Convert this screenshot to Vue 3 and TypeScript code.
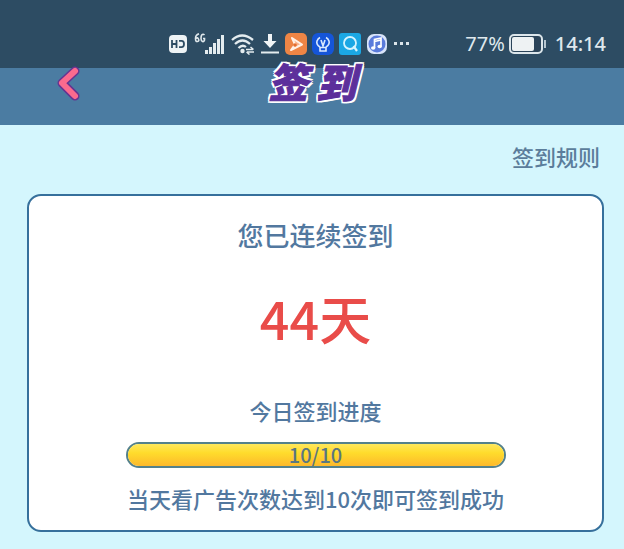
<script setup lang="ts">
import { computed, ref } from 'vue'

const days = ref<number>(44)
const watched = ref<number>(10)
const goal = ref<number>(10)
const percent = computed<string>(() => `${Math.min(100, (watched.value / goal.value) * 100)}%`)
</script>

<template>
  <div class="page">
    <header class="top">
      <div class="status">
        <div class="icons">
          <svg class="hd" width="20" height="20" viewBox="0 0 20 20" aria-hidden="true">
            <rect x="1" y="1" width="18" height="18" rx="4" fill="#eef3f5" />
            <path d="M4 6v8M8.500 6v8M4 10h4.500M11 6.800h2.500q2.500 0 2.500 3.200t-2.500 3.200H11" fill="none" stroke="#2d4c63" stroke-width="1.800" />
          </svg>
          <svg class="signal" width="33" height="22" viewBox="0 0 33 22" aria-hidden="true">
            <path d="M6 .8Q2.500 2 2.500 5.500T4.500 8.500T5.500 6T3 5.500M11.500 2Q10 .5 8.700 2Q8 3 8 5.500T9.500 8.500T11.500 7V5.500H10" fill="none" stroke="#dfe8ec" stroke-width="1.600" />
            <path d="M12 17h3v4h-3zM16 14h3v7h-3zM20 10h3v11h-3zM24 6h3v15h-3zM28 2h3v19h-3z" fill="#e4ecef" />
          </svg>
          <svg class="wifi" width="24" height="22" viewBox="0 0 24 22" aria-hidden="true">
            <path d="M1 7Q11-2 22 7M4 11Q11.500 4 19 11M7.500 15Q11.500 11 15 14" fill="none" stroke="#e4ecef" stroke-width="2.300" />
            <circle cx="11.500" cy="18" r="2.200" fill="#e4ecef" />
            <path d="M15 16.500h7M19.500 14L22.500 16.500M23 19h-7M18.500 21.500L15.500 19" fill="none" stroke="#e4ecef" stroke-width="1.500" />
          </svg>
          <svg class="download" width="20" height="22" viewBox="0 0 20 22" aria-hidden="true">
            <path d="M8 1h4v7h4.500L10 15 3.500 8H8z" fill="#f0f4f6" />
            <path d="M1 19.500h18" stroke="#e4ecef" stroke-width="2" />
          </svg>
          <svg class="app" width="22" height="22" viewBox="0 0 22 22" aria-hidden="true">
            <rect width="22" height="22" rx="5" fill="#ee8545" />
            <path d="M7 5L17 11.500L6 17L10 11.500Z" fill="#f7b088" stroke="#fff1e6" stroke-width="2" stroke-linejoin="round" />
            <circle cx="10" cy="12" r="1.800" fill="#e56d2d" />
          </svg>
          <svg class="app" width="22" height="22" viewBox="0 0 22 22" aria-hidden="true">
            <rect width="22" height="22" rx="6" fill="#1555d8" />
            <path d="M8 14Q4 11.500 5 8Q6 5.500 8 4.500M14 4.500Q16 5.500 17 8Q18 11.500 14 14M9 7L11 13L13 7M8 14.500h6v3.500H8z" fill="none" stroke="#d9e9ff" stroke-width="1.600" />
          </svg>
          <svg class="app" width="22" height="22" viewBox="0 0 22 22" aria-hidden="true">
            <rect width="22" height="22" rx="3" fill="#1ba7e4" />
            <circle cx="11" cy="10" r="6" fill="none" stroke="#d5f4ff" stroke-width="1.800" />
            <path d="M14.500 13L18 18" stroke="#d5f4ff" stroke-width="2.200" />
          </svg>
          <svg class="app" width="22" height="22" viewBox="0 0 22 22" aria-hidden="true">
            <rect x="1" y="1" width="20" height="20" rx="7" fill="#d8e4fa" />
            <circle cx="11" cy="11" r="8.500" fill="#5a7bdb" />
            <path d="M8.500 15V6.500L15 5V13.500M8.500 8.500L15 7" fill="none" stroke="#fff" stroke-width="1.700" />
            <ellipse cx="7.200" cy="15" rx="2.200" ry="1.700" fill="#fff" />
            <ellipse cx="13.700" cy="13.500" rx="2.200" ry="1.700" fill="#fff" />
          </svg>
          <svg class="more" width="18" height="4" viewBox="0 0 18 4" aria-hidden="true">
            <path d="M1 0h3v3H1zM7 0h3v3H7zM13 0h3v3h-3z" fill="#dce5ea" />
          </svg>
        </div>
        <div class="power">
          <span>77%</span>
          <svg width="38" height="22" viewBox="0 0 38 22" aria-hidden="true">
            <rect x="1" y="2" width="32" height="18" rx="4" fill="#2b4459" stroke="#dce6eb" stroke-width="2" />
            <rect x="3" y="4" width="22" height="14" rx="2" fill="#eef2f3" />
            <path d="M36 7v8" stroke="#b5c5d0" stroke-width="2" />
          </svg>
          <time class="clock">14:14</time>
        </div>
      </div>
      <nav class="nav">
        <button class="back" type="button" aria-label="返回">
          <svg width="26" height="40" viewBox="0 0 26 40" aria-hidden="true">
            <path d="M19 7L6 19L19 32" fill="none" stroke="#653391" stroke-width="9" stroke-linecap="round" stroke-linejoin="round" />
            <path d="M19 7L6 19L19 32" fill="none" stroke="#fb6a8e" stroke-width="6" stroke-linecap="round" stroke-linejoin="round" />
          </svg>
        </button>
        <h1 class="title"><span>签</span><span>到</span></h1>
      </nav>
    </header>

    <main class="content">
      <a class="rules" href="#rules">签到规则</a>
      <section class="card">
        <h2 class="lead">您已连续签到</h2>
        <p class="days">{{ days }}天</p>
        <h3 class="label">今日签到进度</h3>
        <div class="bar" role="progressbar" aria-label="今日签到进度" :aria-valuenow="watched" aria-valuemin="0" :aria-valuemax="goal">
          <div class="fill" :style="{ width: percent }"></div>
          <span class="count">{{ watched }}/{{ goal }}</span>
        </div>
        <p class="hint">当天看广告次数达到{{ goal }}次即可签到成功</p>
      </section>
    </main>
  </div>
</template>

<style>
body {
  background: #d4f6fd;
}
</style>

<style scoped>
.page {
  font-family: "Noto Sans CJK SC", "Noto Sans", sans-serif;
  font-weight: 500;
  color: #52789f;
}
.top {
  background: linear-gradient(#2d4c63 68px, #4b7ca2 68px);
}
.status {
  display: flex;
  align-items: center;
  justify-content: space-between;
  padding: 32px 18px 8px 168px;
  height: 24px;
  font-family: "Noto Sans", sans-serif;
  font-size: 20px;
  line-height: 24px;
  font-weight: 400;
  color: #dfe8ed;
}
.icons {
  display: flex;
  align-items: center;
  gap: 5px;
}
.power {
  display: flex;
  align-items: center;
  gap: 4px;
}
.clock {
  margin-left: 4px;
  font-weight: 500;
}
.nav {
  display: grid;
  grid-template-columns: 1fr auto 1fr;
  align-items: start;
  height: 61px;
  padding: 0 56px;
}
.back {
  justify-self: start;
  padding: 0;
  border: 0;
  background: none;
  line-height: 0;
  cursor: pointer;
}
.title {
  display: flex;
  gap: 8px;
  margin: 0;
  font-size: 40px;
  line-height: 34px;
  font-weight: 900;
  font-style: italic;
  color: #5c2f9b;
  -webkit-text-stroke: 1px #5c2f9b;
  text-shadow: 2px 0 #fff, -2px 0 #fff, 0 2px #fff, 0 -2px #fff, 2px 2px #fff, -2px 2px #fff, 2px -2px #fff, -2px -2px #fff;
}
.content {
  display: flex;
  flex-direction: column;
  padding: 16px 20px 16px 27px;
}
.rules {
  align-self: flex-end;
  margin-right: 4px;
  font-size: 22px;
  line-height: 30px;
  color: #5b7d9b;
  text-decoration: none;
}
.card {
  display: flex;
  flex-direction: column;
  align-items: center;
  margin-top: 23px;
  padding: 20px 24px 16px;
  border: 2px solid #36709c;
  border-radius: 14px;
  background: #fff;
  text-align: center;
}
.lead,
.label,
.days,
.hint {
  margin: 0;
  font-weight: inherit;
}
.lead {
  font-size: 26px;
  line-height: 38px;
}
.days {
  margin-top: 34px;
  font-size: 52px;
  line-height: 60px;
  color: #e94c49;
}
.label {
  margin-top: 46px;
  font-size: 22px;
  line-height: 32px;
}
.bar {
  display: grid;
  box-sizing: border-box;
  width: 380px;
  max-width: 100%;
  margin-top: 16px;
  border: 2px solid #54818b;
  border-radius: 13px;
  background: #fff;
}
.fill,
.count {
  grid-area: 1 / 1;
}
.fill {
  border-radius: 11px;
  background: linear-gradient(#ffe85c, #ffdc2c 40%, #fdb92b);
}
.count {
  font-size: 20px;
  line-height: 22px;
  color: #5a7781;
}
.hint {
  margin-top: 14px;
  font-size: 22px;
  line-height: 32px;
}
</style>
